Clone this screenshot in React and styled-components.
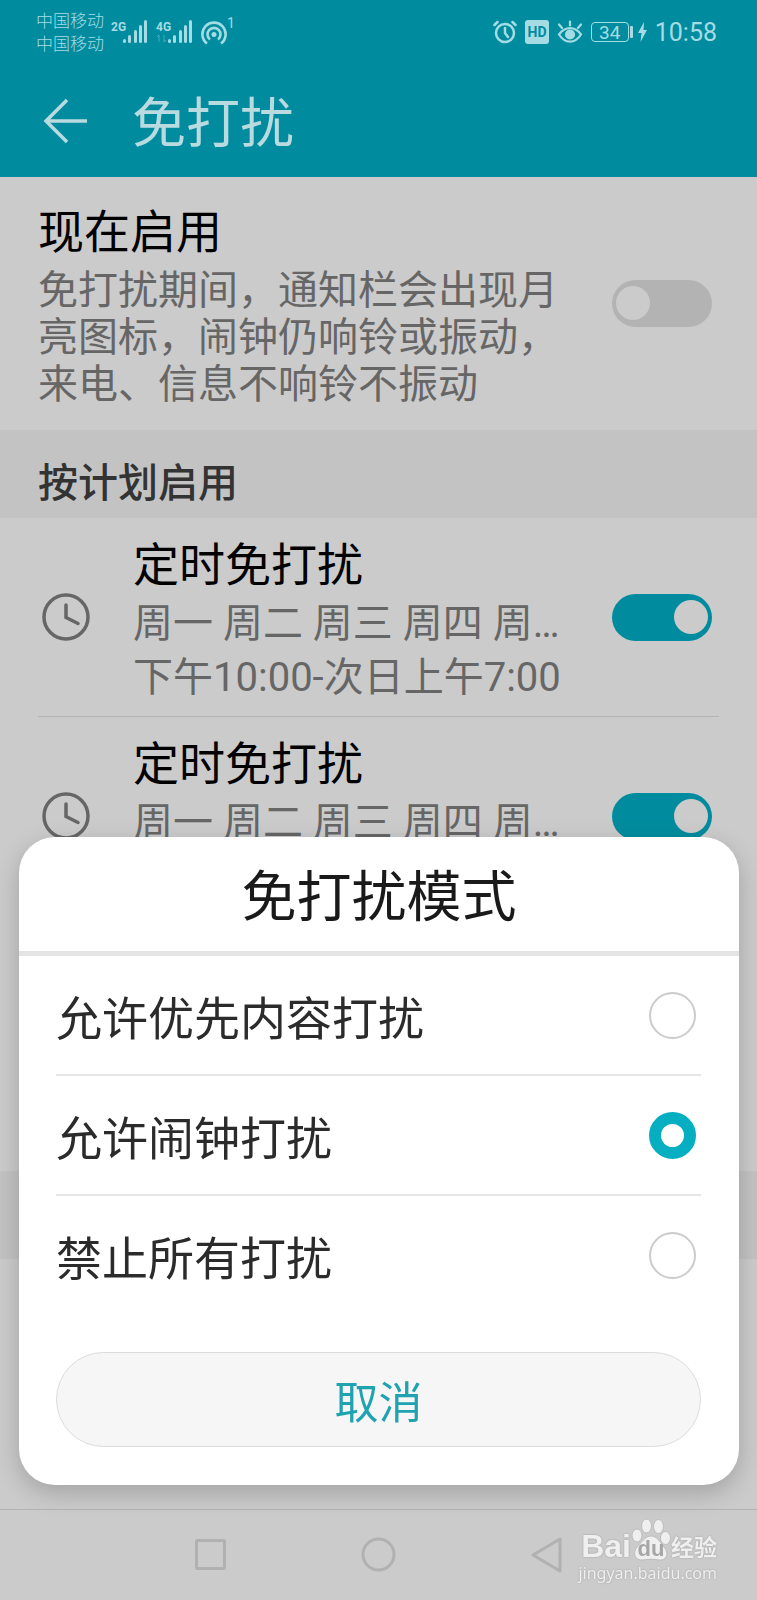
import React, { useState } from "react";
import styled, { createGlobalStyle } from "styled-components";

const GlobalStyle = createGlobalStyle`
  * {
    box-sizing: border-box;
  }

  body {
    margin: 0;
    background-color: #cbcbcb;
    font-family: Roboto, "Noto Sans CJK SC", sans-serif;
    font-weight: 400;
  }

  h1, h2, h3, p {
    margin: 0;
    font-weight: inherit;
  }
`;

const Page = styled.div`
  display: flex;
  flex-direction: column;
  min-height: 100vh;
`;

const Header = styled.header`
  background-color: #008c9e;
  color: #a5dbe3;
`;

const StatusBar = styled.div`
  display: flex;
  align-items: center;
  justify-content: space-between;
  height: 64px;
  padding: 0 40px 0 36px;
`;

const StatusGroup = styled.div`
  display: flex;
  align-items: center;
  gap: ${(props) => props.$gap || "8px"};
`;

const Carriers = styled.div`
  padding-top: 2px;
  font-size: 17px;
  font-weight: 300;
  line-height: 23px;
`;

const Battery = styled.div`
  display: flex;
  align-items: center;
  gap: 1px;
`;

const BatteryBody = styled.span`
  width: 38px;
  height: 20px;
  border: 1px solid currentColor;
  border-radius: 4px;
  font-size: 19px;
  line-height: 19px;
  text-align: center;
`;

const BatteryTip = styled.span`
  width: 3px;
  height: 12px;
  border-radius: 1px;
  background-color: currentColor;
`;

const Time = styled.span`
  font-size: 25px;
`;

const AppBar = styled.div`
  display: flex;
  align-items: center;
  gap: 44px;
  height: 113px;
  padding: 0 42px;
  color: #b9dadf;
`;

const IconButton = styled.button`
  display: flex;
  padding: 0;
  border: none;
  background: none;
  color: inherit;
`;

const PageTitle = styled.h1`
  padding-top: 8px;
  font-size: 54px;
  line-height: 64px;
`;

const NowSection = styled.section`
  display: flex;
  align-items: center;
  gap: 42px;
  padding: 21px 45px 22px 38px;
`;

const TextColumn = styled.div`
  flex: 1;
  min-width: 0;
  padding-top: 4px;
`;

const ItemTitle = styled.h3`
  color: #000;
  font-size: 46px;
  line-height: ${(props) => props.$lineHeight || "64px"};
`;

const Description = styled.p`
  margin-top: 5px;
  color: #666;
  font-size: 40px;
  line-height: 47px;
`;

const ItemDetail = styled.p`
  overflow: hidden;
  color: #666;
  font-size: 40px;
  line-height: 54px;
  text-overflow: ellipsis;
  white-space: nowrap;
`;

const SectionBand = styled.h2`
  height: 88px;
  padding: 20px 38px 0;
  background-color: #c3c3c3;
  color: #333;
  font-size: 40px;
  font-weight: 500;
  line-height: 68px;
`;

const ScheduleList = styled.div`
  flex: 1;
  padding: 0 38px;
`;

const ScheduleRow = styled.div`
  display: flex;
  align-items: center;
  gap: 42px;
  padding: 11px 7px 11px 4px;
  border-bottom: 1px solid #b3b3b3;
`;

const Switch = styled.input.attrs({ type: "checkbox", role: "switch" })`
  appearance: none;
  display: flex;
  align-items: center;
  flex-shrink: 0;
  width: 100px;
  height: 47px;
  margin: 0;
  padding: 0 4px;
  border-radius: 24px;
  background-color: #b3b3b3;

  &::before {
    content: "";
    width: 34px;
    height: 34px;
    border-radius: 50%;
    background-color: #cbcbcb;
  }

  &:checked {
    justify-content: flex-end;
    background-color: #008c9e;
  }
`;

const EmptyArea = styled.div`
  height: 250px;
`;

const NavBar = styled.nav`
  display: flex;
  justify-content: center;
  height: 91px;
  border-top: 1px solid #b3b3b3;
`;

const NavButton = styled.button`
  display: flex;
  align-items: center;
  justify-content: center;
  width: 168px;
  padding: 0;
  border: none;
  background: none;
  color: #b1b1b1;
`;

const Dialog = styled.div`
  position: fixed;
  right: 18px;
  bottom: 115px;
  left: 19px;
  border-radius: 36px;
  background-color: #fff;
  box-shadow: 0 8px 24px rgba(0, 0, 0, 0.2);
`;

const DialogTitle = styled.h2`
  padding: 28px 0 22px;
  border-bottom: 5px solid #e4e4e4;
  color: #1a1a1a;
  font-size: 55px;
  line-height: 64px;
  text-align: center;
`;

const OptionList = styled.div`
  padding: 0 38px 0 37px;
`;

const Option = styled.label`
  display: flex;
  align-items: center;
  justify-content: space-between;
  height: 120px;
  padding-right: 5px;
  color: #2b2b2b;
  font-size: 46px;

  &:first-child {
    height: 118px;
  }

  & + & {
    border-top: 2px solid #e6e6e6;
  }
`;

const Radio = styled.input.attrs({ type: "radio" })`
  appearance: none;
  width: 47px;
  height: 47px;
  margin: 0;
  border: 2px solid #cbcbcb;
  border-radius: 50%;

  &:checked {
    border: 12px solid #06aec2;
  }
`;

const CancelButton = styled.button`
  display: block;
  width: calc(100% - 75px);
  height: 95px;
  margin: 38px 38px 38px 37px;
  padding: 0;
  border: 1px solid #dcdcdc;
  border-radius: 48px;
  background-color: #f6f6f6;
  color: #1fa3b1;
  font: inherit;
  font-size: 44px;
`;

const Watermark = styled.div`
  position: fixed;
  right: 40px;
  bottom: 16px;
  display: flex;
  flex-direction: column;
  color: #efefef;
  text-shadow: 0 0 2px #999;
`;

const WatermarkLogo = styled.div`
  display: flex;
  align-items: flex-end;
  justify-content: flex-end;
  height: 46px;
  font-family: "Liberation Sans", sans-serif;
  font-size: 32px;
  font-weight: 700;
  line-height: 32px;
`;

const Paw = styled.span`
  position: relative;
  display: flex;
  width: 40px;
`;

const PawText = styled.span`
  position: absolute;
  top: 20px;
  left: 0;
  width: 100%;
  color: #a6a6a6;
  font-size: 22px;
  line-height: 22px;
  text-align: center;
  text-shadow: none;
`;

const WatermarkName = styled.span`
  font-family: "Noto Sans CJK SC", sans-serif;
  font-size: 23px;
`;

const WatermarkUrl = styled.span`
  font-family: "Noto Sans", sans-serif;
  font-size: 16px;
  line-height: 22px;
`;

const schedules = [
  {
    id: 1,
    title: "定时免打扰",
    days: "周一 周二 周三 周四 周五 周六 周日",
    time: "下午10:00-次日上午7:00",
  },
  {
    id: 2,
    title: "定时免打扰",
    days: "周一 周二 周三 周四 周五 周六 周日",
    time: "下午10:00-次日上午7:00",
  },
];

const modes = ["允许优先内容打扰", "允许闹钟打扰", "禁止所有打扰"];

const SignalIcon = ({ label, data }) => (
  <svg width="38" height="26" viewBox="0 0 38 26" fill="currentColor">
    <text
      x="0"
      y="12"
      fontFamily="Roboto, sans-serif"
      fontSize="12"
      fontWeight="700"
    >
      {label}
    </text>
    {data && (
      <path
        d="M3 23v-7l-2 2M8 16v7l2-2"
        fill="none"
        stroke="currentColor"
        opacity="0.4"
      />
    )}
    <rect x="12" y="20" width="3" height="4" rx="1.500" />
    <rect x="17" y="16" width="3" height="8" rx="1.500" />
    <rect x="23" y="11" width="3" height="13" rx="1.500" />
    <rect x="28" y="6" width="3" height="18" rx="1.500" />
    <rect x="33" y="1" width="3" height="23" rx="1.500" />
  </svg>
);

const HotspotIcon = () => (
  <svg width="38" height="32" viewBox="0 0 38 32">
    <g fill="none" stroke="currentColor" strokeWidth="2.600">
      <path d="M6 27.500A11.600 11.600 0 1 1 20 27.500" />
      <path d="M9 23.500A6.500 6.500 0 1 1 17 23.500" />
    </g>
    <circle cx="13" cy="18.500" r="2.500" fill="currentColor" />
    <text
      x="26"
      y="12"
      fontFamily="Roboto, sans-serif"
      fontSize="14"
      fill="currentColor"
    >
      1
    </text>
  </svg>
);

const AlarmIcon = () => (
  <svg
    width="24"
    height="24"
    viewBox="0 0 24 24"
    fill="none"
    stroke="currentColor"
    strokeWidth="2.500"
    strokeLinecap="round"
  >
    <circle cx="12" cy="13" r="9" />
    <path d="M12 8v5l3 4M1.500 5 4.500 2M22.500 5 19.500 2" />
  </svg>
);

const HdIcon = () => (
  <svg width="24" height="24" viewBox="0 0 24 24">
    <rect width="24" height="24" rx="3" fill="currentColor" />
    <text
      x="12"
      y="17"
      fontFamily="Roboto, sans-serif"
      fontSize="14"
      fontWeight="700"
      textAnchor="middle"
      fill="#008c9e"
    >
      HD
    </text>
  </svg>
);

const EyeIcon = () => (
  <svg
    width="26"
    height="24"
    viewBox="0 0 26 24"
    fill="none"
    stroke="currentColor"
    strokeWidth="2.200"
    strokeLinecap="round"
  >
    <path d="M2 14.500C8 6 18 6 24 14.500 18 24 8 24 2 14.500Z" />
    <circle cx="13" cy="14.500" r="4" fill="currentColor" />
    <path d="M13 1.500v4M2 4.500l3 3.500M24 4.500 21 8" />
  </svg>
);

const BoltIcon = () => (
  <svg width="9" height="20" viewBox="0 0 9 20" fill="currentColor">
    <path d="M6 0 0 11h3.500L2.500 20 9 8H5.500Z" />
  </svg>
);

const BackIcon = () => (
  <svg
    width="46"
    height="46"
    viewBox="0 0 46 46"
    fill="none"
    stroke="currentColor"
    strokeWidth="3.500"
  >
    <path d="M25 2 4 23l21 21M4 23h41" />
  </svg>
);

const ClockIcon = () => (
  <svg
    width="49"
    height="49"
    viewBox="0 0 49 49"
    fill="none"
    stroke="#666"
    strokeWidth="3.500"
    strokeLinecap="round"
  >
    <circle cx="24" cy="24" r="22" />
    <path d="M24 12v12.500l12 6" />
  </svg>
);

const PawIcon = () => (
  <svg width="40" height="44" viewBox="0 0 40 44" fill="#efefef" stroke="#bbb">
    <ellipse cx="6" cy="17.500" rx="5" ry="6.500" />
    <ellipse cx="15.500" cy="8" rx="5" ry="7" />
    <ellipse cx="27.500" cy="8.500" rx="5" ry="7" />
    <ellipse cx="34.500" cy="20" rx="5" ry="6.500" />
    <path d="M20 18c6 0 9 6 13 11 6 7 2 14-5 13-6-1-10-1-16 0-8 1-11-7-6-13 5-5 8-11 14-11Z" />
  </svg>
);

const App = () => {
  const [mode, setMode] = useState(modes[1]);

  return (
    <Page lang="zh-CN">
      <GlobalStyle />
      <Header>
        <StatusBar>
          <StatusGroup $gap="7px">
            <Carriers>
              <div>中国移动</div>
              <div>中国移动</div>
            </Carriers>
            <SignalIcon label="2G" />
            <SignalIcon label="4G" data />
            <HotspotIcon />
          </StatusGroup>
          <StatusGroup>
            <AlarmIcon />
            <HdIcon />
            <EyeIcon />
            <StatusGroup $gap="5px">
              <Battery>
                <BatteryBody>34</BatteryBody>
                <BatteryTip />
              </Battery>
              <BoltIcon />
            </StatusGroup>
            <Time>10:58</Time>
          </StatusGroup>
        </StatusBar>
        <AppBar>
          <IconButton aria-label="返回">
            <BackIcon />
          </IconButton>
          <PageTitle>免打扰</PageTitle>
        </AppBar>
      </Header>

      <NowSection>
        <TextColumn>
          <ItemTitle id="now-title" $lineHeight="60px">
            现在启用
          </ItemTitle>
          <Description>
            免打扰期间，通知栏会出现月亮图标，闹钟仍响铃或振动，来电、信息不响铃不振动
          </Description>
        </TextColumn>
        <Switch aria-labelledby="now-title" />
      </NowSection>

      <SectionBand>按计划启用</SectionBand>
      <ScheduleList>
        {schedules.map((item) => (
          <ScheduleRow key={item.id}>
            <ClockIcon />
            <TextColumn>
              <ItemTitle id={`schedule-${item.id}`}>{item.title}</ItemTitle>
              <ItemDetail>{item.days}</ItemDetail>
              <ItemDetail>{item.time}</ItemDetail>
            </TextColumn>
            <Switch aria-labelledby={`schedule-${item.id}`} defaultChecked />
          </ScheduleRow>
        ))}
      </ScheduleList>
      <SectionBand as="div" />
      <EmptyArea />

      <NavBar>
        <NavButton aria-label="最近任务">
          <svg width="32" height="32" fill="none" stroke="currentColor" strokeWidth="3">
            <rect x="1.500" y="1.500" width="28" height="28" rx="1" />
          </svg>
        </NavButton>
        <NavButton aria-label="主屏幕">
          <svg width="36" height="36" fill="none" stroke="currentColor" strokeWidth="3">
            <circle cx="17.500" cy="17.500" r="15.500" />
          </svg>
        </NavButton>
        <NavButton aria-label="返回上一页">
          <svg
            width="32"
            height="36"
            fill="none"
            stroke="currentColor"
            strokeWidth="3"
            strokeLinejoin="round"
          >
            <path d="M29 2v32L2 18Z" />
          </svg>
        </NavButton>
      </NavBar>

      <Dialog role="dialog" aria-labelledby="mode-title">
        <DialogTitle id="mode-title">免打扰模式</DialogTitle>
        <OptionList role="radiogroup" aria-labelledby="mode-title">
          {modes.map((item) => (
            <Option key={item}>
              {item}
              <Radio
                name="mode"
                checked={mode === item}
                onChange={() => setMode(item)}
              />
            </Option>
          ))}
        </OptionList>
        <CancelButton>取消</CancelButton>
      </Dialog>

      <Watermark>
        <WatermarkLogo>
          Bai
          <Paw>
            <PawIcon />
            <PawText>du</PawText>
          </Paw>
          <WatermarkName>经验</WatermarkName>
        </WatermarkLogo>
        <WatermarkUrl>jingyan.baidu.com</WatermarkUrl>
      </Watermark>
    </Page>
  );
};

export default App;
